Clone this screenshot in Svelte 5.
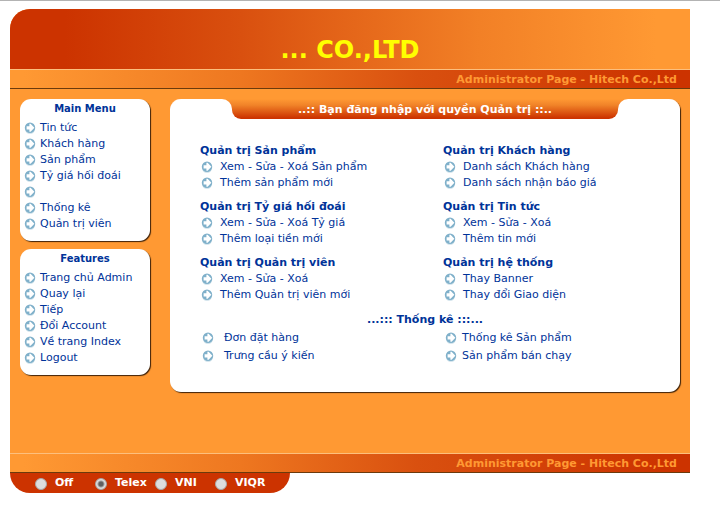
<script>
  let mode = $state('Telex');
  const modes = ['Off', 'Telex', 'VNI', 'VIQR'];

  const menus = [
    {
      title: 'Main Menu',
      items: ['Tin tức', 'Khách hàng', 'Sản phẩm', 'Tỷ giá hối đoái', '', 'Thống kê', 'Quản trị viên']
    },
    {
      title: 'Features',
      items: ['Trang chủ Admin', 'Quay lại', 'Tiếp', 'Đổi Account', 'Về trang Index', 'Logout']
    }
  ];

  const groups = [
    { title: 'Quản trị Sản phẩm', items: ['Xem - Sửa - Xoá Sản phẩm', 'Thêm sản phẩm mới'] },
    { title: 'Quản trị Khách hàng', items: ['Danh sách Khách hàng', 'Danh sách nhận báo giá'] },
    { title: 'Quản trị Tỷ giá hối đoái', items: ['Xem - Sửa - Xoá Tỷ giá', 'Thêm loại tiền mới'] },
    { title: 'Quản trị Tin tức', items: ['Xem - Sửa - Xoá', 'Thêm tin mới'] },
    { title: 'Quản trị Quản trị viên', items: ['Xem - Sửa - Xoá', 'Thêm Quản trị viên mới'] },
    { title: 'Quản trị hệ thống', items: ['Thay Banner', 'Thay đổi Giao diện'] }
  ];

  const stats = ['Đơn đặt hàng', 'Thống kê Sản phẩm', 'Trưng cầu ý kiến', 'Sản phẩm bán chạy'];
</script>

{#snippet arrow()}
  <svg class="arrow" viewBox="0 0 12 12" aria-hidden="true">
    <circle cx="6" cy="6.8" r="5.2" fill="#d5e5ed" />
    <circle cx="6" cy="5.8" r="5.2" fill="#7fb0ca" />
    <path d="M5.4 1.8 6.6 1.8 10.4 5.8 6.6 9.8H5.4V7.4H2.6V4.2h2.8z" fill="#fff" />
  </svg>
{/snippet}

{#snippet link(text)}
  <a href="#top" aria-label={text || 'Menu'}>{@render arrow()}<span>{text}</span></a>
{/snippet}

<div class="window" id="top">
  <div class="page">
    <header><h1>... CO.,LTD</h1></header>
    <div class="bar">Administrator Page - Hitech Co.,Ltd</div>

    <div class="body">
      <aside>
        {#each menus as menu}
          <nav class="panel" aria-label={menu.title}>
            <h2>{menu.title}</h2>
            <ul>
              {#each menu.items as item}
                <li>{@render link(item)}</li>
              {/each}
            </ul>
          </nav>
        {/each}
      </aside>

      <main class="panel">
        <div class="head">
          <span class="cap"></span>
          <h2>..:: Bạn đăng nhập với quyền Quản trị ::..</h2>
          <span class="cap"></span>
        </div>
        <div class="groups">
          {#each groups as group}
            <section>
              <h3>{group.title}</h3>
              <ul>
                {#each group.items as item}
                  <li>{@render link(item)}</li>
                {/each}
              </ul>
            </section>
          {/each}
        </div>
        <h3 class="stats-title">...::: Thống kê :::...</h3>
        <ul class="stats">
          {#each stats as item}
            <li>{@render link(item)}</li>
          {/each}
        </ul>
      </main>
    </div>

    <div class="bar">Administrator Page - Hitech Co.,Ltd</div>
  </div>

  <form class="modes" aria-label="Input method">
    {#each modes as m}
      <label><input type="radio" name="mode" value={m} bind:group={mode} />{m}</label>
    {/each}
  </form>
</div>

<style>
  :global(body) {
    background: #fff;
  }

  .window {
    border-top: 1px solid #b3b3b3;
    padding: 8px 30px 0 10px;
    font: 11px/16px Verdana, 'DejaVu Sans', sans-serif;
    color: #039;
  }

  h1, h2, h3, ul {
    margin: 0;
    padding: 0;
    font-size: 11px;
    list-style: none;
  }

  .page {
    background: #f93;
    border-top-left-radius: 20px;
  }

  header {
    height: 60px;
    box-sizing: border-box;
    padding-top: 26px;
    border-top-left-radius: 20px;
    background: linear-gradient(to right, #c30 8%, #d9500f 34%, #f28026 69%, #f93 95%);
    text-align: center;
  }

  h1 {
    font-size: 24px;
    line-height: 30px;
    color: #ff0;
  }

  .bar {
    border-top: 1px solid #fdbf7d;
    border-bottom: 1px solid #6b3a0c;
    padding: 2px 13px 0 0;
    line-height: 16px;
    font-weight: bold;
    text-align: right;
    color: #f93;
    background: linear-gradient(to right, #f93 2%, #ee7720 34%, #d9500f 60%, #c30 96%);
  }

  .body {
    display: flex;
    align-items: flex-start;
    gap: 20px;
    padding: 10px 10px 61px;
  }

  aside {
    flex: 0 0 130px;
    display: flex;
    flex-direction: column;
    gap: 8px;
  }

  .panel {
    background: #fff;
    border-radius: 11px;
    box-shadow: 1px 1px 1px #3d2109;
  }

  nav {
    padding: 2px 0 9px 4px;
  }

  nav h2 {
    margin-bottom: 3px;
    padding-right: 4px;
    font-size: 10px;
    text-align: center;
  }

  a {
    display: flex;
    align-items: center;
    gap: 4px;
    height: 16px;
    white-space: nowrap;
    color: inherit;
    text-decoration: none;
  }

  .arrow {
    flex: none;
    width: 12px;
    height: 12px;
  }

  main {
    flex: 1;
    overflow: hidden;
    padding-bottom: 28px;
  }

  .head {
    display: flex;
    background: linear-gradient(#f93, #e8702a 10px, #fff 10px);
  }

  .cap {
    flex: 0 0 62px;
    border-radius: 0 10px 0 0;
    background: #fff;
  }

  .cap:last-child {
    border-radius: 10px 0 0 0;
  }

  .head h2 {
    flex: 1;
    padding-top: 2px;
    line-height: 18px;
    text-align: center;
    color: #fff;
    border-radius: 0 0 9px 9px;
    background: linear-gradient(#f93, #f18429 30%, #c30 95%);
  }

  .groups {
    display: grid;
    grid-template-columns: 243px 1fr;
    row-gap: 8px;
    padding: 24px 0 0 30px;
  }

  .groups a {
    gap: 7px;
    padding-left: 1px;
  }

  .stats-title {
    margin-top: 9px;
    text-align: center;
  }

  .stats {
    display: grid;
    grid-template-columns: 243px 1fr;
    row-gap: 2px;
    padding: 2px 0 0 32px;
  }

  .stats a {
    gap: 10px;
  }

  .stats li:nth-child(even) a {
    gap: 5px;
  }

  .modes {
    display: flex;
    width: 280px;
    height: 20px;
    box-sizing: border-box;
    padding-left: 25px;
    border-radius: 0 0 20px 20px;
    background: #c30;
    color: #fff;
    font-weight: bold;
  }

  label {
    display: flex;
    align-items: center;
    gap: 8px;
    width: 60px;
    white-space: nowrap;
  }

  input {
    appearance: none;
    flex: none;
    width: 12px;
    height: 12px;
    margin: 2px 0 0;
    border: 1px solid #a9a9a9;
    border-radius: 50%;
    background: #ddd;
  }

  input:checked {
    background: radial-gradient(circle, #606060 0 2px, #ddd 4px);
  }
</style>
